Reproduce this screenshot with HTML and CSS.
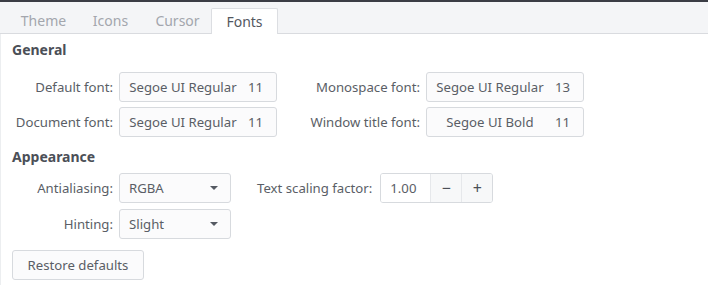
FILE: index.html
```html
<!DOCTYPE html>
<html lang="en">
<head>
  <meta charset="UTF-8" />
  <title>Fonts</title>
  <link rel="stylesheet" href="styles.css">
</head>
<body>
  <div class="topline"></div>

  <!-- Tabs -->
  <div class="tabs">
    <div class="tab">Theme</div>
    <div class="tab">Icons</div>
    <div class="tab">Cursor</div>
    <div class="tab active">Fonts</div>
  </div>

  <div class="page">
    <div class="heading">General</div>
    <div class="font-grid">
      <div class="label">Default font:</div>
      <div class="font-btn"><span class="name">Segoe UI Regular</span><span class="size">11</span></div>
      <div class="label">Monospace font:</div>
      <div class="font-btn"><span class="name">Segoe UI Regular</span><span class="size">13</span></div>
      <div class="label">Document font:</div>
      <div class="font-btn"><span class="name">Segoe UI Regular</span><span class="size">11</span></div>
      <div class="label">Window title font:</div>
      <div class="font-btn"><span class="name">Segoe UI Bold</span><span class="size">11</span></div>
    </div>

    <div class="heading second">Appearance</div>
    <div class="appearance">
      <div class="row">
        <div class="label">Antialiasing:</div>
        <div class="combo"><span>RGBA</span><span class="arrow"></span></div>
        <div class="label scale-label">Text scaling factor:</div>
        <div class="spin">
          <div class="spin-value">1.00</div>
          <div class="spin-btn">&minus;</div>
          <div class="spin-btn">+</div>
        </div>
      </div>
      <div class="row">
        <div class="label">Hinting:</div>
        <div class="combo"><span>Slight</span><span class="arrow"></span></div>
      </div>
    </div>

    <button class="restore">Restore defaults</button>
  </div>
</body>
</html>
```

FILE: styles.css
```css
html, body {
  margin: 0;
  padding: 0;
  background: #ffffff;
  font-family: "Noto Sans", "Open Sans", sans-serif;
  font-size: 13.2px;
  color: #5a5e66;
  overflow: hidden;
}
.topline {
  height: 2px;
  background: #3b3d45;
}

/* Tabs */
.tabs {
  display: flex;
  height: 32px;
  padding-left: 10px;
  background: #f4f5f7;
  border-bottom: 1px solid #d9dbdf;
  box-sizing: border-box;
}
.tab {
  width: 67px;
  margin-top: 6px;
  display: flex;
  align-items: center;
  justify-content: center;
  font-size: 14px;
  color: #a3a6ad;
}
.tab.active {
  background: #ffffff;
  color: #53575f;
  border: 1px solid #dcdee2;
  border-bottom: none;
  border-radius: 2px 2px 0 0;
  margin-bottom: -1px;
  width: 65px;
}

.page {
  padding: 0 0 0 11px;
  border-left: 1px solid #eceef0;
  height: 252px;
  box-sizing: border-box;
}
.heading {
  font-weight: 700;
  font-size: 14px;
  color: #4b4f57;
  height: 20px;
  line-height: 20px;
  padding-top: 6px;
}
.heading.second {
  padding-top: 10px;
}

.font-grid {
  display: grid;
  grid-template-columns: 101px 158px 137px 158px;
  column-gap: 6px;
  row-gap: 5px;
  margin-top: 12px;
}
.label {
  text-align: right;
  align-self: center;
  white-space: nowrap;
}
.font-btn {
  height: 30px;
  display: flex;
  align-items: center;
  border: 1px solid #d7dade;
  border-radius: 3px;
  background: #fbfbfc;
  box-sizing: border-box;
  padding: 0 13px 0 8px;
}
.font-btn .name {
  flex: 1;
  text-align: center;
}
.font-btn .size {
  padding-left: 10px;
}

.appearance {
  display: flex;
  flex-direction: column;
  gap: 6px;
  margin-top: 6px;
}
.row {
  display: flex;
  align-items: center;
  gap: 6px;
}
.row .label {
  width: 101px;
}
.combo {
  width: 112px;
  height: 30px;
  box-sizing: border-box;
  border: 1px solid #d7dade;
  border-radius: 3px;
  background: #fbfbfc;
  display: flex;
  align-items: center;
  justify-content: space-between;
  padding: 0 12px 0 9px;
}
.arrow {
  width: 0;
  height: 0;
  border-left: 4px solid transparent;
  border-right: 4px solid transparent;
  border-top: 4px solid #555a62;
}
.scale-label {
  margin-left: 20px;
  width: auto !important;
}
.spin {
  display: flex;
  height: 30px;
  border: 1px solid #d7dade;
  border-radius: 3px;
  box-sizing: border-box;
  margin-left: 2px;
  overflow: hidden;
}
.spin-value {
  width: 49px;
  padding-left: 9px;
  box-sizing: border-box;
  display: flex;
  align-items: center;
  background: #ffffff;
}
.spin-btn {
  width: 30px;
  display: flex;
  align-items: center;
  justify-content: center;
  background: #f7f8f9;
  border-left: 1px solid #e6e8eb;
  font-size: 16px;
  color: #4b4f57;
}

.restore {
  margin-top: 11px;
  height: 30px;
  width: 132px;
  font: inherit;
  color: #5a5e66;
  background: #fbfbfc;
  border: 1px solid #d7dade;
  border-radius: 3px;
  padding: 0;
}
```
